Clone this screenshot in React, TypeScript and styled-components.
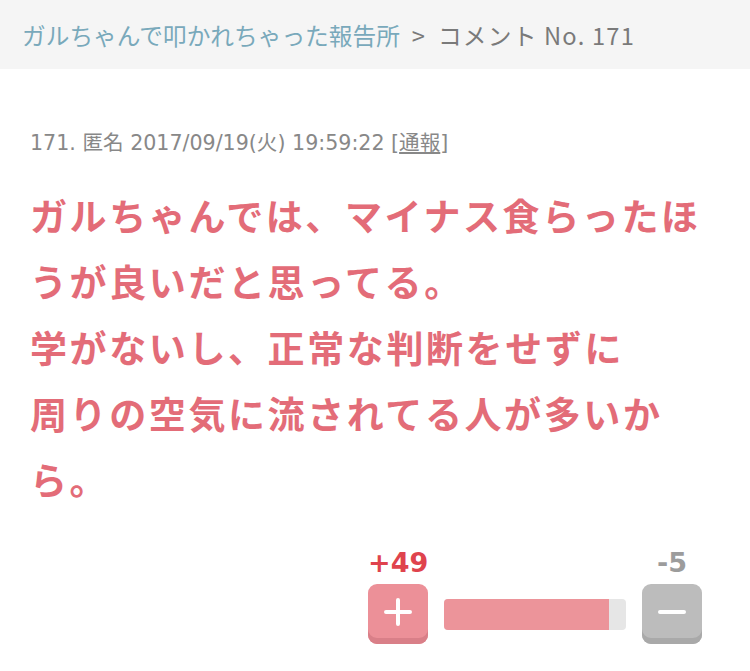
import React from 'react'
import styled, { createGlobalStyle } from 'styled-components'

const GlobalStyle = createGlobalStyle`
  html, body {
    margin: 0;
    padding: 0;
    background: #fff;
  }
  body {
    font-family: 'Noto Sans CJK JP', 'DejaVu Sans', sans-serif;
  }
`

const Page = styled.div`
  width: 750px;
  min-height: 671px;
  background: #fff;
`

const Breadcrumb = styled.nav`
  height: 69px;
  background: #f5f5f5;
  display: flex;
  align-items: center;
  padding: 0 22px;
  box-sizing: border-box;
  font-family: 'Noto Sans CJK JP', sans-serif;
  font-size: 23.7px;
  color: #7a7a7a;
  white-space: nowrap;
`

const CrumbLink = styled.a`
  color: #79a9bb;
  text-decoration: none;
`

const Separator = styled.span`
  margin: 0 13px 0 12px;
`

const Current = styled.span`
  letter-spacing: 1.2px;
`

const Comment = styled.article`
  padding: 61px 30px 0;
`

const Meta = styled.div`
  font-family: 'DejaVu Sans', 'Noto Sans CJK JP', sans-serif;
  font-size: 20.6px;
  color: #888;
  line-height: 26px;
`

const Report = styled.a`
  color: #888;
  text-decoration: underline;
`

const Body = styled.p`
  margin: 26px 0 0;
  font-family: 'Noto Sans CJK JP', sans-serif;
  font-weight: 700;
  font-size: 37px;
  letter-spacing: 2.6px;
  line-height: 66px;
  color: #e36c78;
  width: 690px;
`

const VoteArea = styled.div`
  display: flex;
  justify-content: flex-end;
  padding: 36px 18px 0 0;
`

const Vote = styled.div`
  display: grid;
  grid-template-columns: 60px 182px 60px;
  column-gap: 16px;
  align-items: center;
`

const Count = styled.div<{ tone: 'plus' | 'minus' }>`
  font-family: 'DejaVu Sans', sans-serif;
  font-weight: 700;
  font-size: 27px;
  line-height: 30px;
  text-align: center;
  color: ${({ tone }) => (tone === 'plus' ? '#df434d' : '#9c9c9c')};
  margin-bottom: 6px;
`

const VoteButton = styled.button<{ tone: 'plus' | 'minus' }>`
  width: 60px;
  height: 60px;
  border: none;
  border-radius: 9px;
  padding: 0 0 5px;
  display: flex;
  align-items: center;
  justify-content: center;
  background: ${({ tone }) => (tone === 'plus' ? '#ec9098' : '#bcbcbc')};
  box-shadow: inset 0 -6px 0 ${({ tone }) => (tone === 'plus' ? '#d97f88' : '#a9a9a9')};
`

const Bar = styled.div`
  height: 31px;
  border-radius: 4px;
  background: #e6e6e6;
  overflow: hidden;
`

const BarFill = styled.div`
  height: 100%;
  background: #ec949a;
`

const App = () => {
  const plus = 49
  const minus = 5
  const ratio = plus / (plus + minus)

  return (
    <Page>
      <GlobalStyle />
      <Breadcrumb>
        <CrumbLink href="#">ガルちゃんで叩かれちゃった報告所</CrumbLink>
        <Separator>&gt;</Separator>
        <Current>コメント No. 171</Current>
      </Breadcrumb>
      <Comment>
        <Meta>
          171. 匿名 2017/09/19(火) 19:59:22 [<Report href="#">通報</Report>]
        </Meta>
        <Body>
          ガルちゃんでは、マイナス食らったほうが良いだと思ってる。
          <br />
          学がないし、正常な判断をせずに
          <br />
          周りの空気に流されてる人が多いから。
        </Body>
        <VoteArea>
          <Vote>
            <Count tone="plus">+{plus}</Count>
            <div />
            <Count tone="minus">-{minus}</Count>
            <VoteButton tone="plus" aria-label="plus">
              <svg width="28" height="28" viewBox="0 0 28 28">
                <path d="M14 2v24M2 14h24" stroke="#fff" strokeWidth="4" strokeLinecap="round" />
              </svg>
            </VoteButton>
            <Bar>
              <BarFill style={{ width: `${ratio * 100}%` }} />
            </Bar>
            <VoteButton tone="minus" aria-label="minus">
              <svg width="28" height="28" viewBox="0 0 28 28">
                <path d="M2 14h24" stroke="#fff" strokeWidth="4" strokeLinecap="round" />
              </svg>
            </VoteButton>
          </Vote>
        </VoteArea>
      </Comment>
    </Page>
  )
}

export default App
